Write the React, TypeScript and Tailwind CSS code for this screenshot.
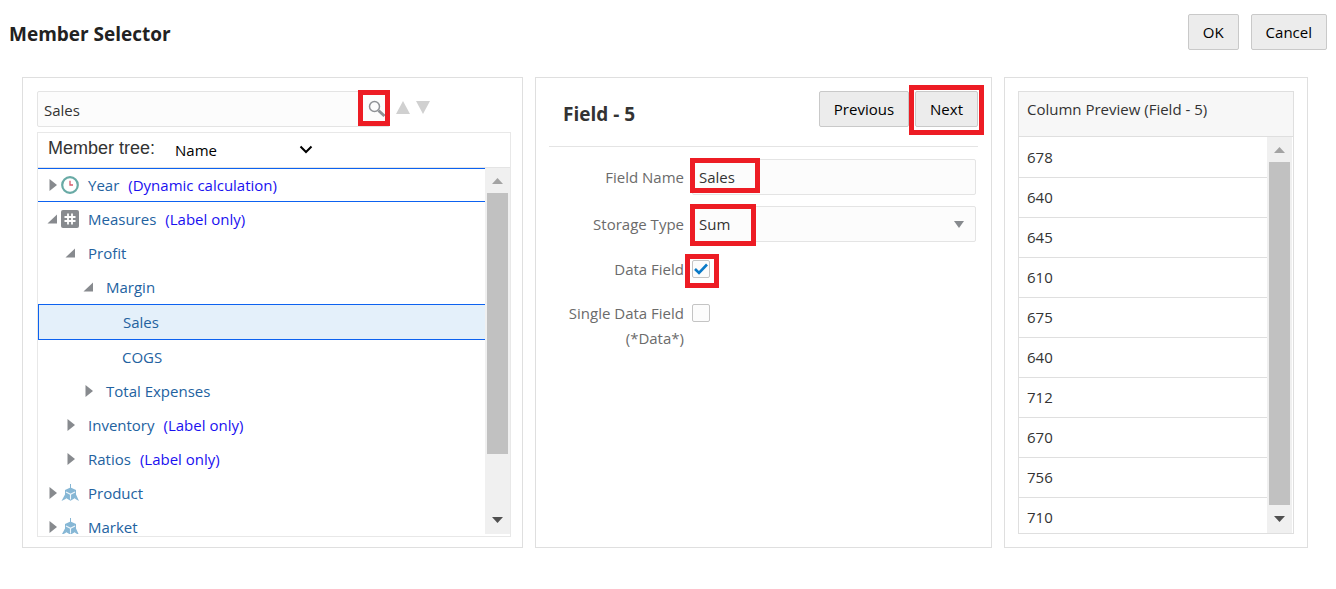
import type { ReactNode } from "react";

type TreeNode = {
  name: string;
  note?: string;
  depth: number;
  state: "open" | "closed" | "leaf";
  icon?: "clock" | "measure" | "dimension";
  focused?: boolean;
  selected?: boolean;
};

const nodes: TreeNode[] = [
  { name: "Year", note: "(Dynamic calculation)", depth: 0, state: "closed", icon: "clock", focused: true },
  { name: "Measures", note: "(Label only)", depth: 0, state: "open", icon: "measure" },
  { name: "Profit", depth: 1, state: "open" },
  { name: "Margin", depth: 2, state: "open" },
  { name: "Sales", depth: 3, state: "leaf", selected: true },
  { name: "COGS", depth: 3, state: "leaf" },
  { name: "Total Expenses", depth: 2, state: "closed" },
  { name: "Inventory", note: "(Label only)", depth: 1, state: "closed" },
  { name: "Ratios", note: "(Label only)", depth: 1, state: "closed" },
  { name: "Product", depth: 0, state: "closed", icon: "dimension" },
  { name: "Market", depth: 0, state: "closed", icon: "dimension" },
];

const values = [678, 640, 645, 610, 675, 640, 712, 670, 756, 710];

const indents = ["pl-2", "pl-[26px]", "pl-11", "pl-[60px]"];

function Highlight({ className }: { className: string }) {
  return <span aria-hidden="true" className={`pointer-events-none absolute border-5 border-[#ed1c24] ${className}`} />;
}

function Button({ children }: { children: ReactNode }) {
  return (
    <button type="button" className="h-9 rounded-xs border border-[#c9c9c9] bg-[#ececec] px-3.5 text-black">
      {children}
    </button>
  );
}

function Expander({ state }: { state: TreeNode["state"] }) {
  if (state === "leaf") return <span className="w-3 shrink-0" />;
  return (
    <svg width="12" height="12" viewBox="0 0 12 12" className="shrink-0" fill="#878a8e">
      {state === "closed" ? <path d="M3.500 0v12l7.500-6z" /> : <path d="M11 1.500v9H1.500z" />}
    </svg>
  );
}

function NodeIcon({ icon }: { icon?: TreeNode["icon"] }) {
  if (icon === "clock")
    return (
      <svg width="18" height="18" viewBox="0 0 18 18" fill="none">
        <circle cx="9" cy="9" r="7.8" fill="#fff" stroke="#68aaa5" strokeWidth="2.2" />
        <path d="M9 4.8V9h3" stroke="#d85a6b" strokeWidth="1.3" />
      </svg>
    );
  if (icon === "measure")
    return (
      <svg width="18" height="18" viewBox="0 0 18 18" fill="none">
        <rect width="18" height="18" rx="2" fill="#878a8e" />
        <path d="M7 3.5v11M11 3.5v11M3.5 7h11M3.5 11h11" stroke="#fff" strokeWidth="1.8" />
      </svg>
    );
  if (icon === "dimension")
    return (
      <svg width="18" height="18" viewBox="0 0 18 18" fill="none">
        <path d="M9 0h1v5H9z" fill="#86b7d5" />
        <path d="m9.500 3.500 5.500 2.500v7.500l-5.500 3.200L4 13.500V6z" fill="#86b7d5" />
        <path d="m5 8 4.500 2.300L14 8M9.500 10.300v5.200" stroke="#eef6fb" strokeWidth="1.100" />
        <path d="M4 10.500.5 17l4.500-2.200zM15 10.500l3 6.500-4-2.200z" fill="#86b7d5" />
      </svg>
    );
  return null;
}

function ScrollTrack({ children }: { children: ReactNode }) {
  return (
    <div aria-hidden="true" className="flex w-[25px] shrink-0 flex-col items-center bg-[#f0f0f0]">
      <div className="flex h-[25px] shrink-0 items-center">
        <svg width="11" height="6" viewBox="0 0 11 6" fill="#a3a3a3">
          <path d="M5.500 0 11 6H0z" />
        </svg>
      </div>
      <div className="flex w-[21px] flex-1 flex-col">{children}</div>
      <div className="flex h-7 shrink-0 items-center">
        <svg width="11" height="6" viewBox="0 0 11 6" fill="#505050">
          <path d="M5.500 6 11 0H0z" />
        </svg>
      </div>
    </div>
  );
}

function TreeRow({ node }: { node: TreeNode }) {
  const indent = indents[node.depth];
  const look = node.selected
    ? "h-9 border border-r-0 border-[#0d62f0] bg-[#e4f0fa]"
    : node.focused
      ? "h-[34px] border-y border-[#0d62f0]"
      : "h-[34px]";
  return (
    <li role="treeitem" aria-selected={!!node.selected} className={`flex items-center leading-4 ${indent} ${look}`}>
      <Expander state={node.state} />
      {node.depth === 0 && (
        <span className="ml-[3px] w-[18px] shrink-0">
          <NodeIcon icon={node.icon} />
        </span>
      )}
      <span className={`${node.depth === 0 ? "ml-[9px]" : "ml-3"} whitespace-nowrap text-[#23629f]`}>{node.name}</span>
      {node.note && <span className="ml-[9px] whitespace-nowrap text-[#1a10f0]">{node.note}</span>}
    </li>
  );
}

function MemberPanel() {
  return (
    <section className="border border-[#dfdfdf] pt-[13px] pr-[11px] pb-2.5 pl-3.5">
      <div className="flex items-center">
        <div className="relative flex h-9 w-[353px] items-center rounded-xs border border-[#e4e4e4] bg-[#fcfcfc]">
          <input
            aria-label="Search members"
            defaultValue="Sales"
            className="h-full min-w-0 flex-1 bg-transparent px-1.5 pt-0.5 text-[#333] outline-none"
          />
          <button type="button" aria-label="Search" className="flex w-8 justify-center">
            <svg width="18" height="18" viewBox="0 0 18 18" fill="none" className="ml-2">
              <circle cx="6.500" cy="6.500" r="5" stroke="#8f9296" strokeWidth="1.500" />
              <path d="m10.500 10.500 6 5.500" stroke="#8f9296" strokeWidth="3" />
            </svg>
          </button>
          <Highlight className="-top-0.5 -right-px h-9 w-8" />
        </div>
        <div className="mb-1 ml-1.5 flex gap-1.5">
          <button type="button" aria-label="Previous match">
            <svg width="14" height="13" viewBox="0 0 14 13" fill="#d0d0d0">
              <path d="m7 0 7 13H0z" />
            </svg>
          </button>
          <button type="button" aria-label="Next match">
            <svg width="14" height="13" viewBox="0 0 14 13" fill="#d0d0d0">
              <path d="M7 13 14 0H0z" />
            </svg>
          </button>
        </div>
      </div>
      <div className="mt-[5px] border border-[#e8e8e8] pb-0.5">
        <div className="flex h-[35px] items-center border-b border-[#e4e4e4] pl-2.5">
          <label htmlFor="tree-label" className="pb-1 font-['Liberation_Sans',sans-serif] text-lg text-[#333]">
            Member tree:
          </label>
          <div className="relative ml-5 flex items-center">
            <select id="tree-label" defaultValue="Name" className="w-36 appearance-none bg-transparent text-black">
              <option>Name</option>
              <option>Alias</option>
            </select>
            <svg width="14" height="10" viewBox="0 0 14 10" fill="none" className="pointer-events-none absolute right-1.5">
              <path d="m1.500 1.500 5.500 5.500 5.500-5.500" stroke="#000" strokeWidth="2" />
            </svg>
          </div>
        </div>
        <div className="flex h-[366px]">
          <ul role="tree" aria-label="Members" className="min-w-0 flex-1 overflow-hidden">
            {nodes.map((node) => (
              <TreeRow key={node.name} node={node} />
            ))}
          </ul>
          <ScrollTrack>
            <div className="h-5/6 bg-[#c1c1c1]" />
          </ScrollTrack>
        </div>
      </div>
    </section>
  );
}

const fieldLabel = "text-right text-[#6b6b6b]";
const checkBox =
  "peer size-[18px] appearance-none rounded-xs border border-[#c4c4c4] bg-[#fcfcfc]";

function FieldPanel() {
  return (
    <section className="border border-[#dfdfdf] px-[13px] pt-[13px]">
      <header className="flex items-start justify-between border-b border-[#e4e4e4] pb-[19px] pl-3.5">
        <h2 className="pt-[11px] text-[19px] leading-[25px] font-bold text-[#333]">Field - 5</h2>
        <div className="flex gap-1.5">
          <Button>Previous</Button>
          <div className="relative">
            <Button>Next</Button>
            <Highlight className="-inset-x-1.5 -top-1.5 -bottom-2" />
          </div>
        </div>
      </header>
      <div className="grid grid-cols-[135px_1fr] items-center gap-x-2 pt-3 pr-0.5">
        <label htmlFor="field-name" className={fieldLabel}>Field Name</label>
        <div className="relative">
          <input
            id="field-name"
            defaultValue="Sales"
            className="h-9 w-full rounded-xs border border-[#e4e4e4] bg-[#fcfcfc] px-1.5 text-[#333]"
          />
          <Highlight className="-top-px -left-0.5 h-[35px] w-[70px]" />
        </div>
        <label htmlFor="storage-type" className={`${fieldLabel} pt-[11px]`}>Storage Type</label>
        <div className="relative mt-[11px] flex items-center">
          <select
            id="storage-type"
            defaultValue="Sum"
            className="h-9 w-full appearance-none rounded-xs border border-[#e4e4e4] bg-[#fcfcfc] px-1.5 text-[#333]"
          >
            <option>Sum</option>
            <option>Average</option>
          </select>
          <svg width="10" height="7" viewBox="0 0 10 7" fill="#878a8e" className="pointer-events-none absolute right-3">
            <path d="M5 7 10 0H0z" />
          </svg>
          <Highlight className="-top-0.5 -left-0.5 h-[42px] w-[66px]" />
        </div>
        <label htmlFor="data-field" className={`${fieldLabel} pt-[15px] leading-6`}>Data Field</label>
        <div className="relative mt-[15px] flex w-[18px]">
          <input id="data-field" type="checkbox" defaultChecked className={checkBox} />
          <svg width="18" height="18" viewBox="0 0 18 18" fill="none" className="pointer-events-none absolute opacity-0 peer-checked:opacity-100">
            <path d="m3 9 4 4 8-8.500" stroke="#0a7ac8" strokeWidth="2.600" />
          </svg>
          <Highlight className="-top-1.5 -left-[7px] size-[34px]" />
        </div>
        <label htmlFor="single-data-field" className={`${fieldLabel} pt-5 leading-[25px]`}>
          Single Data Field (*Data*)
        </label>
        <input id="single-data-field" type="checkbox" className={`${checkBox} mt-[23px] self-start`} />
      </div>
    </section>
  );
}

function PreviewPanel() {
  return (
    <section className="border border-[#dfdfdf] p-[13px]">
      <div className="h-full border border-[#dfdfdf]">
        <h2 className="h-[45px] border-b border-[#dfdfdf] bg-[#f7f7f7] px-2 pt-[5px] text-[#333]">
          Column Preview (Field - 5)
        </h2>
        <div className="flex h-[396px] overflow-hidden pr-px">
          <div className="min-w-0 flex-1">
            <table aria-label="Column preview" className="w-full border-collapse text-[#333]">
              <tbody>
                {values.map((value, i) => (
                  <tr key={i} className="h-10 border-b border-[#dfdfdf] last:border-b-0">
                    <td className="px-2 py-0">{value}</td>
                  </tr>
                ))}
              </tbody>
            </table>
          </div>
          <ScrollTrack>
            <div className="h-full bg-[#c1c1c1]" />
          </ScrollTrack>
        </div>
      </div>
    </section>
  );
}

export default function App() {
  return (
    <main className="min-h-screen bg-white pb-10 font-['Open_Sans','Noto_Sans',sans-serif] text-[15px] leading-6">
      <header className="flex items-start justify-between pt-3.5 pr-[9px] pl-[9px]">
        <h1 className="pt-1.5 text-[19px] leading-7 font-bold text-[#222]">Member Selector</h1>
        <div className="flex gap-3">
          <Button>OK</Button>
          <Button>Cancel</Button>
        </div>
      </header>
      <div className="grid grid-cols-[501fr_457fr_304fr] gap-3 pt-[27px] pr-7 pl-[22px]">
        <MemberPanel />
        <FieldPanel />
        <PreviewPanel />
      </div>
    </main>
  );
}
